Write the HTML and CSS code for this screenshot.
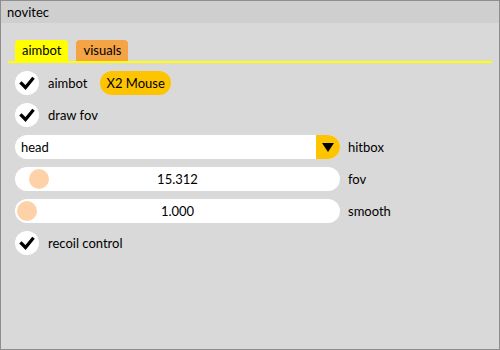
FILE: index.html
```html
<!DOCTYPE html>
<html>
<head>
<meta charset="utf-8">
<link rel="stylesheet" href="styles.css">
</head>
<body>
<div class="window">
  <div class="titlebar">novitec</div>
  <div class="content">
    <div class="tabbar">
      <div class="tab tab-active">aimbot</div>
      <div class="tab tab-other">visuals</div>
    </div>
    <div class="rows">
      <div class="row">
        <span class="check"><svg viewBox="0 0 24 24" width="24" height="24"><path d="M6.5 12.5 L10.5 16.5 L17.5 8" fill="none" stroke="#000" stroke-width="3.2" stroke-linecap="square"/></svg></span>
        <span class="label">aimbot</span>
        <span class="badge">X2 Mouse</span>
      </div>
      <div class="row">
        <span class="check"><svg viewBox="0 0 24 24" width="24" height="24"><path d="M6.5 12.5 L10.5 16.5 L17.5 8" fill="none" stroke="#000" stroke-width="3.2" stroke-linecap="square"/></svg></span>
        <span class="label">draw fov</span>
      </div>
      <div class="row">
        <div class="combo">
          <span class="combo-text">head</span>
          <span class="combo-btn"><svg viewBox="0 0 24 24" width="24" height="24"><path d="M6 8 H18 L12 17 Z" fill="#000"/></svg></span>
        </div>
        <span class="label side">hitbox</span>
      </div>
      <div class="row">
        <div class="slider">
          <span class="grab" style="margin-left:14px"></span>
          <span class="slider-val">15.312</span>
        </div>
        <span class="label side">fov</span>
      </div>
      <div class="row">
        <div class="slider">
          <span class="grab" style="margin-left:2px"></span>
          <span class="slider-val">1.000</span>
        </div>
        <span class="label side">smooth</span>
      </div>
      <div class="row">
        <span class="check"><svg viewBox="0 0 24 24" width="24" height="24"><path d="M6.5 12.5 L10.5 16.5 L17.5 8" fill="none" stroke="#000" stroke-width="3.2" stroke-linecap="square"/></svg></span>
        <span class="label">recoil control</span>
      </div>
    </div>
  </div>
</div>
</body>
</html>
```
FILE: styles.css
```css
* { box-sizing: border-box; }
html, body { margin: 0; padding: 0; }
body {
  width: 500px;
  height: 350px;
  font-family: "Lato", "Open Sans", sans-serif;
  font-size: 13px;
  color: #000;
  background: #d9d9d9;
}
.window {
  width: 500px;
  height: 350px;
  border: 1px solid #8e8e8e;
  background: #d9d9d9;
  display: flex;
  flex-direction: column;
}
.titlebar {
  height: 22px;
  background: #cfcfcf;
  padding-left: 6px;
  line-height: 22px;
}
.content {
  padding: 17px 7px 0 7px;
}
.tabbar {
  display: flex;
  gap: 8px;
  padding-left: 7px;
  border-bottom: 2px solid #ffff00;
}
.tab {
  height: 21px;
  line-height: 21px;
  padding: 0 7px;
  border-radius: 4px 4px 0 0;
}
.tab-active { background: #ffff00; }
.tab-other { background: #f4a345; }
.rows {
  display: flex;
  flex-direction: column;
  gap: 8px;
  padding: 8px 0 0 7px;
}
.row {
  height: 24px;
  display: flex;
  align-items: center;
}
.check {
  width: 24px;
  height: 24px;
  border-radius: 50%;
  background: #fff;
  display: flex;
}
.label {
  margin-left: 9px;
}
.label.side { margin-left: 8px; }
.badge {
  margin-left: 13px;
  height: 24px;
  line-height: 24px;
  padding: 0 6px;
  border-radius: 12px;
  background: #ffc400;
}
.combo {
  width: 325px;
  height: 24px;
  background: #fff;
  border-radius: 12px;
  display: flex;
  align-items: center;
  overflow: hidden;
}
.combo-text {
  flex: 1;
  padding-left: 6px;
}
.combo-btn {
  width: 24px;
  height: 24px;
  background: #ffc400;
  display: flex;
}
.slider {
  width: 325px;
  height: 24px;
  background: #fff;
  border-radius: 12px;
  position: relative;
  display: flex;
  align-items: center;
}
.grab {
  width: 20px;
  height: 20px;
  border-radius: 50%;
  background: #ffd1a8;
}
.slider-val {
  position: absolute;
  left: 0;
  right: 0;
  text-align: center;
  pointer-events: none;
}
```
